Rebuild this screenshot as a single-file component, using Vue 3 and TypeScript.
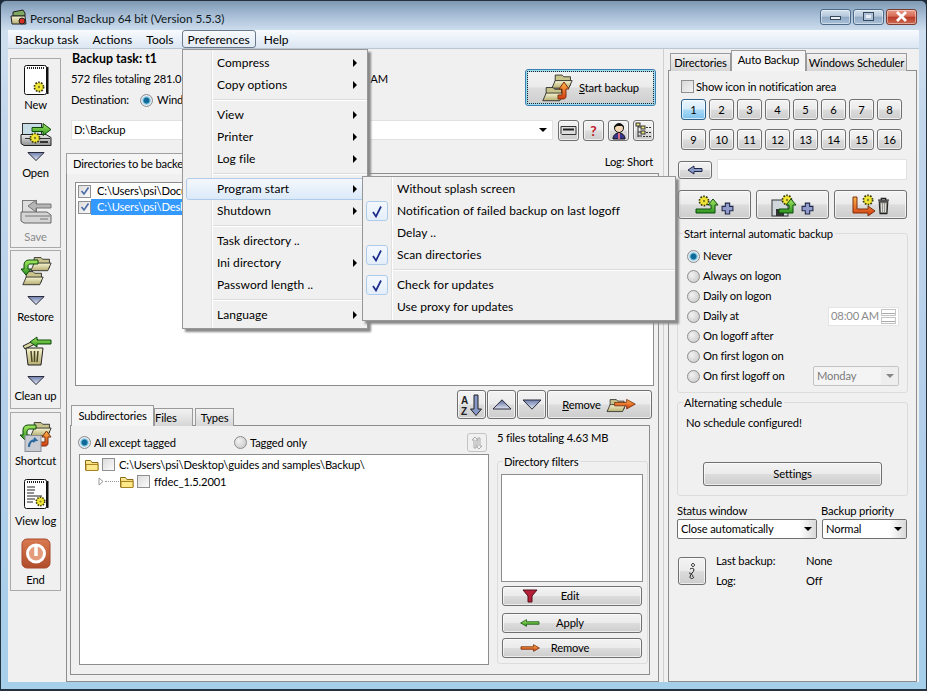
<script setup lang="ts">
interface MenuItem { label?: string; arrow?: boolean; hl?: boolean; check?: boolean; sep?: boolean }
const prefMenu: MenuItem[] = [
  { label: 'Compress', arrow: true }, { label: 'Copy options', arrow: true }, { sep: true },
  { label: 'View', arrow: true }, { label: 'Printer', arrow: true }, { label: 'Log file', arrow: true }, { sep: true },
  { label: 'Program start', arrow: true, hl: true }, { label: 'Shutdown', arrow: true }, { sep: true },
  { label: 'Task directory ..' }, { label: 'Ini directory', arrow: true }, { label: 'Password length ..' }, { sep: true },
  { label: 'Language', arrow: true },
]
const startMenu: MenuItem[] = [
  { label: 'Without splash screen' }, { label: 'Notification of failed backup on last logoff', check: true },
  { label: 'Delay ..' }, { label: 'Scan directories', check: true }, { sep: true },
  { label: 'Check for updates', check: true }, { label: 'Use proxy for updates' },
]
const menuBar = ['Backup task', 'Actions', 'Tools', 'Preferences', 'Help']
const numbers = Array.from({ length: 16 }, (_, i) => i + 1)
const schedules = ['Never', 'Always on logon', 'Daily on logon', 'Daily at', 'On logoff after', 'On first logon on', 'On first logoff on']
</script>

<template>
  <svg class="defs" width="0" height="0" aria-hidden="true">
    <defs>
      <linearGradient id="gF" x1="0" y1="0" x2="0" y2="1"><stop offset="0" stop-color="#f8f5d2" /><stop offset="1" stop-color="#b5ad70" /></linearGradient>
      <linearGradient id="gY" x1="0" y1="0" x2="0" y2="1"><stop offset="0" stop-color="#fff0a0" /><stop offset="1" stop-color="#e6b93a" /></linearGradient>
      <linearGradient id="gG" x1="0" y1="0" x2="0" y2="1"><stop offset="0" stop-color="#a5e860" /><stop offset="1" stop-color="#2c9420" /></linearGradient>
      <linearGradient id="gO" x1="0" y1="0" x2="0" y2="1"><stop offset="0" stop-color="#ffb548" /><stop offset="1" stop-color="#d23a10" /></linearGradient>
      <linearGradient id="gT" x1="0" y1="0" x2="0" y2="1"><stop offset="0" stop-color="#6f80ae" /><stop offset="1" stop-color="#e4e8f4" /></linearGradient>
      <linearGradient id="gU" x1="0" y1="1" x2="0" y2="0"><stop offset="0" stop-color="#e4e8f4" /><stop offset="1" stop-color="#4f6294" /></linearGradient>
      <linearGradient id="gD" x1="0" y1="0" x2="0" y2="1"><stop offset="0" stop-color="#ececec" /><stop offset="1" stop-color="#8f8f8f" /></linearGradient>
      <linearGradient id="gE" x1="0" y1="0" x2="0" y2="1"><stop offset="0" stop-color="#d97a52" /><stop offset="1" stop-color="#b04c2a" /></linearGradient>
    </defs>
    <symbol id="folder" viewBox="0 0 26 20">
      <path d="M5 10V3h8l2 2h8v10H5z" fill="#c9c38c" stroke="#222" />
      <path d="M1 18.500l4-9h20l-4 9z" fill="url(#gF)" stroke="#222" />
    </symbol>
    <symbol id="tfolder" viewBox="0 0 16 14">
      <path d="M1.500 12V2.500h5l1.500 2h6V12z" fill="url(#gY)" stroke="#8a6a14" />
      <path d="M2 12.500V6.500h12v6z" fill="#ffe88a" stroke="#a88420" />
    </symbol>
    <symbol id="gear" viewBox="0 0 12 12">
      <circle cx="6" cy="6" r="4.600" fill="#e8dc20" stroke="#3a3a10" stroke-width="1.800" stroke-dasharray="1.600 1.300" />
      <circle cx="6" cy="6" r="3.300" fill="#f2e63a" />
      <circle cx="6" cy="6" r="1.200" fill="#8a8420" />
    </symbol>
    <symbol id="tri" viewBox="0 0 18 9"><path d="M.8.5h16.400L9 8.500z" fill="url(#gT)" stroke="#2a2a3a" /></symbol>
    <symbol id="plus" viewBox="0 0 12 12"><path d="M4 1h4v3h3v4H8v3H4V8H1V4h3z" fill="#8f9ccc" stroke="#22284a" /></symbol>
    <symbol id="trash" viewBox="0 0 12 16">
      <path d="M1 3h10M4 3V1.500h4V3" fill="none" stroke="#222" stroke-width="1.200" />
      <path d="M2 4.500h8l-.8 11H2.800z" fill="#8a8a80" stroke="#222" />
      <path d="M4.200 6v8M6 6v8M7.800 6v8" stroke="#ddd" />
    </symbol>
    <symbol id="page" viewBox="0 0 26 32">
      <rect x="1.500" y="1.500" width="22" height="29" rx="2" fill="#fff" stroke="#111" />
      <path d="M24.500 3v27" stroke="#111" stroke-width="2" />
      <path d="M4 4h17" stroke="#222" stroke-width="2" stroke-dasharray="1 1" />
    </symbol>
    <symbol id="drive" viewBox="0 0 32 14">
      <path d="M1 1.500h25l5 3v8H4l-3-2z" fill="url(#gD)" stroke="#222" />
      <path d="M5 5.500h25" stroke="#333" />
      <path d="M20 9h8" stroke="#333" stroke-width="2" />
    </symbol>
    <symbol id="larr" viewBox="0 0 24 10"><path d="M.8 5l7-4v2.500h15v3h-15V9z" fill="url(#gG)" stroke="#1a5a14" /></symbol>
    <symbol id="rarr" viewBox="0 0 24 10"><path d="M23.200 5l-7-4v2.500h-15v3h15V9z" fill="url(#gO)" stroke="#7a3010" /></symbol>
  </svg>

  <div class="window">
    <header class="titlebar">
      <svg class="appicon" width="17" height="17" viewBox="0 0 17 17">
        <path d="M3 3l10-2 2 3v3H3z" fill="#7fa860" stroke="#222" />
        <path d="M1 7h14l1 8H2z" fill="url(#gF)" stroke="#222" />
        <circle cx="12" cy="12" r="3" fill="#d83020" stroke="#222" />
      </svg>
      <span class="title">Personal Backup 64 bit (Version 5.5.3)</span>
      <div class="caps">
        <span class="cap"><i class="g-min"></i></span>
        <span class="cap"><i class="g-max"></i></span>
        <span class="cap close">
          <svg width="13" height="11" viewBox="0 0 13 11"><path d="M2 1l9 9M11 1l-9 9" stroke="#fff" stroke-width="2.800" /></svg>
        </span>
      </div>
    </header>

    <nav class="menubar">
      <span v-for="m in menuBar" :key="m" class="mb-item" :class="{ open: m === 'Preferences' }">{{ m }}</span>
    </nav>

    <main class="client">
      <aside class="toolbar">
        <section class="tgroup g1">
          <div class="tool t-new">
            <svg class="ic" width="26" height="32" viewBox="0 0 26 32"><use href="#page" width="26" height="32" /><use href="#gear" x="10" y="17" width="12" height="12" /></svg>
            <span>New</span>
          </div>
          <div class="tool t-open">
            <svg class="ic" width="32" height="26" viewBox="0 0 32 26">
              <rect x="2.500" y="1.500" width="19" height="13" fill="#c7dde6" stroke="#333" />
              <use href="#drive" y="11" width="32" height="14" />
              <path d="M12 5.500h11V1.500l8 6-8 6v-4H12z" fill="url(#gG)" stroke="#0c4a0c" />
              <use href="#gear" x="9" y="10" width="12" height="12" />
            </svg>
            <svg class="tr" width="18" height="9"><use href="#tri" width="18" height="9" /></svg>
            <span>Open</span>
          </div>
          <div class="tool t-save">
            <svg class="ic" width="32" height="27" viewBox="0 0 32 27">
              <rect x="2.500" y="2.500" width="14" height="12" fill="#ddd" stroke="#777" />
              <path d="M31 6H16V2L8 8l8 6v-4h15z" fill="#b5b5b5" stroke="#777" />
              <path d="M1 14h26l4 3v8H4l-3-2z" fill="#d4d4d4" stroke="#666" />
              <path d="M5 18h25M20 21h8" stroke="#777" />
            </svg>
            <span class="dim">Save</span>
          </div>
        </section>
        <section class="tgroup g2">
          <div class="tool t-restore">
            <svg class="ic" width="32" height="31" viewBox="0 0 32 31">
              <use href="#folder" x="10" width="22" height="17" />
              <use href="#folder" x="2" y="14" width="22" height="17" />
              <path d="M18 5H9C6 5 4 7 4 10v4H1l5 6 5-6H8v-3c0-1 1-2 2-2h8z" fill="url(#gG)" stroke="#0c4a0c" />
            </svg>
            <svg class="tr" width="18" height="9"><use href="#tri" width="18" height="9" /></svg>
            <span>Restore</span>
          </div>
          <div class="tool t-clean">
            <svg class="ic" width="32" height="30" viewBox="0 0 32 30">
              <path d="M3 10l14-7 2 3-14 7z" fill="#d8d4a0" stroke="#222" />
              <path d="M6 12h17l-2 17H8z" fill="url(#gF)" stroke="#222" />
              <path d="M11 15l1 11M14.500 15v11M18 15l-1 11" stroke="#4a4620" stroke-width="1.500" />
              <path d="M31 4H17V1l-7 5 7 5V8h14z" fill="url(#gG)" stroke="#0c4a0c" />
            </svg>
            <svg class="tr" width="18" height="9"><use href="#tri" width="18" height="9" /></svg>
            <span>Clean up</span>
          </div>
        </section>
        <section class="tgroup g3">
          <div class="tool t-short">
            <svg class="ic" width="33" height="32" viewBox="0 0 33 32">
              <use href="#folder" x="11" width="22" height="17" />
              <path d="M17 5H9C6 5 4 7 4 10v5H1l5 5 5-5H8v-3c0-1 1-3 2-3h7z" fill="url(#gG)" stroke="#0c4a0c" />
              <path d="M19 26h7c2 0 3-1 3-3v-6h3l-4.500-6L23 17h3v5h-7z" fill="url(#gO)" stroke="#7a3010" />
              <rect x="6" y="15.500" width="16" height="16" fill="#c8ccd2" stroke="#8a8f98" />
              <path d="M10 27c0-5 3-7 7-7l-2-2M17 20l-3 2" fill="none" stroke="#2d6aa0" stroke-width="2" />
            </svg>
            <span>Shortcut</span>
          </div>
          <div class="tool t-log">
            <svg class="ic" width="26" height="32" viewBox="0 0 26 32">
              <use href="#page" width="26" height="32" />
              <path d="M4 9h8M4 12h8M4 15h7M4 18h15M4 21h8M4 24h6" stroke="#222" />
              <use href="#gear" x="12" y="18" width="11" height="11" />
            </svg>
            <span>View log</span>
          </div>
          <div class="tool t-end">
            <svg class="ic" width="30" height="31" viewBox="0 0 30 31">
              <rect x="1" y="1" width="28" height="29" rx="5" fill="url(#gE)" stroke="#a84a2c" />
              <circle cx="15" cy="15.500" r="8.500" fill="#e39d7c" stroke="#fff" stroke-width="3" />
              <path d="M15 8v10" stroke="#fff" stroke-width="3.500" />
            </svg>
            <span>End</span>
          </div>
        </section>
      </aside>

      <div class="center">
        <div class="top">
          <div class="top-text">
            <div class="line bold">Backup task: t1</div>
            <div class="line files"><span>572 files totaling 281.0 MB</span><span>07:27 AM</span></div>
            <div class="line dest"><span class="dest-label">Destination:</span><i class="radio on"></i><span>Windows</span></div>
          </div>
          <button class="btn start">
            <svg width="33" height="31" viewBox="0 0 33 31">
              <use href="#folder" x="11" width="22" height="18" />
              <use href="#folder" y="13" width="26" height="17" />
              <path d="M18 27h5c2 0 3-1 3-3v-7h3l-5-7-5 7h3v6h-4z" fill="url(#gO)" stroke="#7a3010" />
            </svg>
            <span><u>S</u>tart backup</span>
          </button>
        </div>
        <div class="dest-row">
          <div class="dest-combo"><span>D:\Backup</span><i class="caret"></i></div>
          <button class="btn sq">
            <svg width="17" height="11" viewBox="0 0 17 11"><path d="M1 1.500h15v8H2l-1-1z" fill="#ddd" stroke="#333" /><path d="M3 4.500h11" stroke="#222" stroke-width="2" /></svg>
          </button>
          <button class="btn sq help">?</button>
          <button class="btn sq">
            <svg width="16" height="18" viewBox="0 0 16 18"><circle cx="8" cy="6" r="4.500" fill="#f5d8b5" stroke="#111" /><path d="M3 6c0-5 10-6 10 0l-2-2H6z" fill="#111" /><path d="M2 17c0-4 3-6 6-6s6 2 6 6z" fill="#38358a" stroke="#111" /><path d="M8 11v6" stroke="#d86a8a" stroke-width="2" /></svg>
          </button>
          <button class="btn sq">
            <svg width="17" height="17" viewBox="0 0 17 17"><path d="M3 2v13M3 5h4M3 10h4M3 14h4" stroke="#333" fill="none" /><rect x="1" y="1" width="4" height="3" fill="#e8e080" stroke="#333" /><rect x="6" y="4" width="4" height="3" fill="#e8e080" stroke="#333" /><rect x="6" y="9" width="4" height="3" fill="#e8e080" stroke="#333" /><path d="M11 5.500h5M11 10.500h5M8 14.500h8" stroke="#333" stroke-dasharray="2 1" /></svg>
          </button>
        </div>

        <div class="dirs-head">
          <span class="dirs-tab">Directories to be backed up</span>
          <span class="log-short">Log: Short</span>
        </div>
        <section class="dirs">
          <div class="dirlist">
            <div class="dirrow"><i class="cb checked"><svg width="10" height="10" viewBox="0 0 10 10"><path d="M1.500 5l2.500 3 4.500-6.500" fill="none" stroke="#4a6aa8" stroke-width="1.600" /></svg></i><span>C:\Users\psi\Docu</span></div>
            <div class="dirrow"><i class="cb checked"><svg width="10" height="10" viewBox="0 0 10 10"><path d="M1.500 5l2.500 3 4.500-6.500" fill="none" stroke="#4a6aa8" stroke-width="1.600" /></svg></i><span class="sel">C:\Users\psi\Desk</span></div>
          </div>
          <div class="dir-actions">
            <div class="btabs">
              <span class="btab active">Subdirectories</span>
              <span class="btab files">Files</span>
              <span class="btab types">Types</span>
            </div>
            <div class="act-btns">
              <button class="btn act">
                <svg width="24" height="24" viewBox="0 0 24 24"><text x="1" y="11" class="az">A</text><text x="1" y="22" class="az">Z</text><path d="M14 2h4v14h3.500L16 22.500 10.500 16H14z" fill="#8898c8" stroke="#222" /></svg>
              </button>
              <button class="btn act"><svg width="20" height="11" viewBox="0 0 20 11"><path d="M10 .8L19 10H1z" fill="url(#gU)" stroke="#2a2a3a" /></svg></button>
              <button class="btn act"><svg width="20" height="11" viewBox="0 0 20 11"><path d="M10 10.200L19 1H1z" fill="url(#gT)" stroke="#2a2a3a" /></svg></button>
              <button class="btn act-remove">
                <span><u>R</u>emove</span>
                <svg width="31" height="18" viewBox="0 0 36 20"><use href="#folder" y="1" width="24" height="18" /><path d="M10 7h14V3.500L34 9l-10 5.500V11H10z" fill="url(#gO)" stroke="#7a3010" /></svg>
              </button>
            </div>
          </div>
          <section class="subpanel">
            <div class="sub-left">
              <div class="sub-radios">
                <label class="rlabel first"><i class="radio on"></i>All except tagged</label>
                <label class="rlabel second"><i class="radio"></i>Tagged only</label>
                <button class="btn refresh" disabled>
                  <svg width="14" height="14" viewBox="0 0 14 14"><path d="M4 12V4H2l3-3 3 3H6v8zM10 2v8h2l-3 3-3-3h2V2z" fill="none" stroke="#aaa" /></svg>
                </button>
              </div>
              <div class="tree">
                <div class="tree-row">
                  <svg width="16" height="14"><use href="#tfolder" width="16" height="14" /></svg>
                  <i class="cb"></i><span class="tree-text">C:\Users\psi\Desktop\guides and samples\Backup\</span>
                </div>
                <div class="tree-row sub">
                  <svg width="6" height="9" viewBox="0 0 6 9"><path d="M1 1l4 3.500L1 8z" fill="#fff" stroke="#999" /></svg>
                  <i class="dots"></i>
                  <svg width="16" height="14"><use href="#tfolder" width="16" height="14" /></svg>
                  <i class="cb"></i><span class="tree-text">ffdec_1.5.2001</span>
                </div>
              </div>
            </div>
            <div class="sub-right">
              <div class="count">5 files totaling 4.63 MB</div>
              <div class="grp filters">
                <div class="grp-title">Directory filters</div>
                <div class="filter-box"></div>
                <button class="btn fbtn edit">
                  <svg width="20" height="14" viewBox="0 0 20 14"><path d="M3 1h14l-5 6v6H8V7z" fill="#b52038" stroke="#501018" /></svg>
                  <span>Edit</span>
                </button>
                <button class="btn fbtn apply">
                  <svg width="20" height="10"><use href="#larr" width="20" height="10" /></svg>
                  <span>Apply</span>
                </button>
                <button class="btn fbtn">
                  <svg width="20" height="10"><use href="#rarr" width="20" height="10" /></svg>
                  <span>Remove</span>
                </button>
              </div>
            </div>
          </section>
        </section>
      </div>

      <div class="right">
        <div class="rtabs">
          <span class="rtab t1">Directories</span>
          <span class="rtab t2 active">Auto Backup</span>
          <span class="rtab t3">Windows Scheduler</span>
        </div>
        <section class="rpanel">
          <label class="show"><i class="cb plain"></i>Show icon in notification area</label>
          <div class="nums">
            <button v-for="n in numbers" :key="n" class="btn num" :class="{ on: n === 1 }">{{ n }}</button>
          </div>
          <div class="name-row">
            <button class="btn back"><svg width="16" height="10" viewBox="0 0 16 10"><path d="M1 5l6-4v2.500h8v3H7V9z" fill="#8c9ac8" stroke="#20284a" /></svg></button>
            <div class="name-input"></div>
          </div>
          <div class="three">
            <button class="btn tbtn">
              <svg width="40" height="22" viewBox="0 0 40 22">
                <use href="#gear" x="3" y="1" width="12" height="12" />
                <path d="M1 15h15v-4h-3l5-6 5 6h-3v8H1z" fill="url(#gG)" stroke="#0c4a0c" />
                <use href="#plus" x="26" y="8" width="13" height="13" />
              </svg>
            </button>
            <button class="btn tbtn">
              <svg width="44" height="24" viewBox="0 0 44 24">
                <rect x="1" y="7" width="16" height="16" fill="#cfd6dc" stroke="#333" /><rect x="5" y="16" width="8" height="7" fill="#333" />
                <use href="#gear" x="10" y="1" width="12" height="12" />
                <path d="M8 16h10v-4h-3l5-6 5 6h-3v8H8z" fill="url(#gG)" stroke="#0c4a0c" />
                <use href="#plus" x="30" y="9" width="13" height="13" />
              </svg>
            </button>
            <button class="btn tbtn">
              <svg width="38" height="24" viewBox="0 0 38 24">
                <use href="#gear" x="10" y="1" width="12" height="12" />
                <path d="M1 4h4v12h11v-3l7 5-7 5v-3H1z" fill="url(#gO)" stroke="#7a3010" />
                <use href="#trash" x="25" y="3" width="13" height="19" />
              </svg>
            </button>
          </div>

          <div class="grp sched">
            <div class="grp-title">Start internal automatic backup</div>
            <div class="radios">
              <div v-for="(s, i) in schedules" :key="s" class="rrow">
                <label class="rlabel"><i class="radio" :class="{ on: i === 0 }"></i>{{ s }}</label>
                <div v-if="i === 3" class="timefield"><span>08:00 AM</span><i class="spin"><b></b><b class="dn"></b></i></div>
                <div v-if="i === 6" class="combo disabled"><span>Monday</span><i class="combo-btn"><i class="caret grey"></i></i></div>
              </div>
            </div>
          </div>

          <div class="grp alt">
            <div class="grp-title">Alternating schedule</div>
            <div class="alt-text">No schedule configured!</div>
            <button class="btn settings">Settings</button>
          </div>

          <div class="selects">
            <div class="sel-col status">
              <div class="sel-label">Status window</div>
              <div class="combo"><span>Close automatically</span><i class="combo-btn"><i class="caret"></i></i></div>
            </div>
            <div class="sel-col prio">
              <div class="sel-label">Backup priority</div>
              <div class="combo"><span>Normal</span><i class="combo-btn"><i class="caret"></i></i></div>
            </div>
          </div>

          <div class="info-row">
            <button class="btn info">
              <svg width="12" height="18" viewBox="0 0 12 18"><path d="M7 1.500a1.500 1.500 0 1 0 .01 0M4 7c2-1 4-1 4 1 0 2-4 4-4 7 0 2 3 2 4 0M3 11c2 0 4 2 4 4" fill="none" stroke="#222" /></svg>
            </button>
            <dl class="info-grid">
              <dt>Last backup:</dt><dd>None</dd>
              <dt>Log:</dt><dd>Off</dd>
            </dl>
          </div>
        </section>
      </div>
    </main>

    <div class="menu pref">
      <template v-for="(item, i) in prefMenu" :key="i">
        <div v-if="item.sep" class="msep"></div>
        <div v-else class="mitem" :class="{ hl: item.hl }"><span>{{ item.label }}</span><i v-if="item.arrow" class="marrow"></i></div>
      </template>
    </div>
    <div class="menu startm">
      <template v-for="(item, i) in startMenu" :key="i">
        <div v-if="item.sep" class="msep"></div>
        <div v-else class="mitem">
          <i v-if="item.check" class="mcheck"><svg width="12" height="13" viewBox="0 0 12 13"><path d="M2 7l3 4.500L10 1.500" fill="none" stroke="#1a2a8a" stroke-width="1.700" /></svg></i>
          <span>{{ item.label }}</span>
        </div>
      </template>
    </div>
  </div>
</template>

<style>
html, body { margin: 0; padding: 0; background: #1a2a36; overflow: hidden; }
#app { width: 927px; height: 691px; }
</style>

<style scoped>
* { box-sizing: border-box; }
i { font-style: normal; display: block; flex: none; }
.defs { display: block; }
.window {
  position: relative; width: 927px; height: 691px; padding: 0 7px 7px;
  border: 1px solid #24323f; border-bottom-width: 2px; border-radius: 6px 6px 0 0;
  color: #000;
  font: 11.2px/16px Lato, sans-serif; letter-spacing: -0.15px;
  background: linear-gradient(180deg, #7f99b3 0, #a6bdd5 14px, #cfdfef 30px, #c3d7ec 120px, #b4cfea 400px, #a6cfea 691px);
  overflow: hidden;
  display: flex; flex-direction: column;
}
.titlebar { height: 29px; display: flex; align-items: center; margin-left: 2px; padding-top: 4px; flex: none; }
.title { margin-left: 3px; font-size: 11.7px; letter-spacing: 0; color: #101820; }
.caps { margin-left: auto; margin-right: 2px; display: flex; gap: 2px; margin-top: -2px; }
.cap { width: 31px; height: 16px; border: 1px solid #4d6a88; border-radius: 3px; display: flex; align-items: center; justify-content: center;
  background: linear-gradient(#d4e1ee 0, #b5c8db 45%, #90a9c4 50%, #a8c0d8 100%); box-shadow: inset 0 0 0 1px #ffffff70; }
.cap.close { border-color: #7a3b30; background: linear-gradient(#e89a88 0, #d66b56 45%, #b83a26 50%, #cc6a50 100%); }
.g-min { width: 11px; height: 4px; background: #e8eef4; border: 1px solid #39495c; margin-top: 3px; }
.g-max { width: 11px; height: 9px; border: 1px solid #39495c; background: #e8eef4; position: relative; box-shadow: inset 0 0 0 2px #aec3d9; }
.menubar { height: 19px; flex: none; display: flex; align-items: center;
  background: linear-gradient(#f8fbfe, #dbe6f2); border-bottom: 1px solid #b9c6d3; font-size: 12px; letter-spacing: 0; }
.mb-item { padding: 0 6px; line-height: 17px; height: 18px; border: 1px solid transparent; white-space: nowrap; }
.mb-item.open { margin: 0 1px; padding: 0 5px; border-color: #6a7a8c; border-radius: 3px; background: linear-gradient(#f6f9fc, #e2eaf3); }
.client { flex: 1; display: flex; background: #f0f0f0; min-height: 0; }

.toolbar { width: 51px; margin-left: 2px; flex: none; padding-top: 9px; }
.tgroup { border: 1px solid #a9a9a9; }
.g1 { height: 190px; margin-bottom: 2px; }
.g2 { height: 159px; margin-bottom: 3px; }
.g3 { height: 179px; }
.tool { display: flex; flex-direction: column; align-items: center; }
.ic, .tr { display: block; flex: none; }
.dim { color: #8a8a8a; }
.t-new { margin-top: 5px; } .t-new .ic { margin-bottom: 1px; }
.t-open { margin-top: 9px; } .t-open .tr { margin: 4px 0 4px; }
.t-save { margin-top: 17px; } .t-save .ic { margin-bottom: 4px; }
.t-restore { margin-top: 4px; } .t-restore .tr { margin: 10px 0 4px; }
.t-clean { margin-top: 11px; } .t-clean .tr { margin: 10px 0 3px; }
.t-short { margin-top: 7px; } .t-short .ic { margin-bottom: 1px; }
.t-log { margin-top: 9px; } .t-log .ic { margin-bottom: 3px; }
.t-end { margin-top: 9px; } .t-end .ic { margin-bottom: 3px; }

.center { width: 598px; flex: none; margin-left: 5px; border-right: 1px solid #cfcfcf; display: flex; flex-direction: column; }
.top { height: 71px; display: flex; flex: none; }
.top-text { padding-left: 5px; }
.line { height: 20px; line-height: 20px; }
.bold { font-weight: 700; font-size: 12.4px; letter-spacing: 0; padding-left: 1px; }
.files { width: 317px; display: flex; justify-content: space-between; }
.dest { display: flex; align-items: center; height: 22px; }
.dest-label { width: 69px; }
.dest .radio { margin-right: 4px; }
.btn { font: inherit; letter-spacing: inherit; color: #000; padding: 0; margin: 0; flex: none; display: flex; align-items: center; justify-content: center;
  border: 1px solid #707070; border-radius: 3px;
  background: linear-gradient(#f3f3f3 0, #ebebeb 48%, #dcdcdc 52%, #cdcdcd 100%); box-shadow: inset 0 0 0 1px #ffffffa0; }
.start { width: 131px; height: 37px; margin: 20px 7px 0 auto; gap: 6px; border: 1px solid #3c7fb1; padding-left: 14px; justify-content: flex-start;
  outline: 1px dotted #222; outline-offset: -3px; box-shadow: inset 0 0 0 2px #9ddcf0; }
.dest-row { height: 21px; display: flex; gap: 4px; flex: none; padding-left: 5px; }
.dest-combo { width: 482px; margin-right: 1px; height: 20px; background: #fff; border: 1px solid #e2e2e2; display: flex; align-items: center; justify-content: space-between; padding: 0 5px 0 2px; }
.caret { width: 0; height: 0; border: 4px solid transparent; border-top: 4px solid #000; border-bottom: 0; }
.caret.grey { border-top-color: #888; }
.sq { width: 21px; height: 21px; }
.help { color: #c0202a; font-weight: 700; font-size: 14px; }
.dirs-head { height: 21px; margin-top: 12px; margin-bottom: -1px; display: flex; justify-content: space-between; width: 593px; position: relative; z-index: 1; flex: none; }
.dirs-tab { width: 190px; background: #f5f5f5; border: 1px solid #a0a0a0; border-bottom: 0; padding: 0 0 0 6px; line-height: 19px; }
.log-short { line-height: 18px; padding-right: 6px; }
.dirs { width: 593px; flex: 1; min-height: 0; border: 1px solid #8d8d8d; padding: 8px 4px 6px 3px; }
.dirlist { margin-left: 5px; height: 204px; background: #fff; border: 1px solid #8d8d8d; }
.dirrow { height: 16px; display: flex; align-items: center; padding-left: 2px; }
.cb { width: 13px; height: 13px; border: 1px solid #8e8f8f; background: linear-gradient(135deg, #dcdcdc, #fbfbfb); display: flex; align-items: center; justify-content: center; }
.dirrow span { padding: 0 0 0 6px; width: 92px; line-height: 16px; white-space: nowrap; }
.dirrow .sel { background: #3399ff; color: #fff; }
.dir-actions { height: 36px; margin-top: 4px; margin-bottom: -1px; display: flex; justify-content: space-between; position: relative; z-index: 1; }
.btabs { align-self: flex-end; display: flex; margin-left: 1px; }
.btab { height: 18px; line-height: 17px; padding: 0; border: 1px solid #9a9a9a; border-bottom: 0; text-align: center; background: linear-gradient(#f2f2f2, #d6d6d6); align-self: flex-end; }
.btab.active { height: 21px; width: 83px; background: #f5f5f5; line-height: 19px; }
.btab.files { width: 39px; }
.btab.types { width: 39px; margin-left: 2px; }
.act-btns { display: flex; gap: 1px; margin-right: 2px; align-self: flex-start; }
.act { width: 29px; height: 29px; }
.az { font: 700 10px/1 "Liberation Sans", sans-serif; fill: #222; }
.act-remove { width: 105px; height: 29px; gap: 5px; }
.subpanel { height: 250px; margin-right: 4px; border: 1px solid #8d8d8d; background: #f0f0f0; display: flex; }
.sub-left { width: 410px; margin-left: 8px; padding-top: 7px; flex: none; }
.sub-radios { height: 19px; display: flex; align-items: center; margin-bottom: 2px; }
.rlabel { display: flex; align-items: center; gap: 3px; white-space: nowrap; }
.sub-radios .first { width: 156px; margin-left: -1px; }
.refresh { width: 20px; height: 19px; margin-left: auto; margin-right: 2px; background: #f0f0f0; border-color: #c4c4c4; box-shadow: none; }
.radio { width: 13px; height: 13px; border-radius: 50%; border: 1px solid #8c8c8c; background: radial-gradient(circle at 35% 35%, #f2f2f2, #c4c4c4); position: relative; }
.radio.on { background: radial-gradient(circle at 50% 50%, #0f6a98 0, #0f6a98 30%, #7cc0e0 45%, #e4eef4 60%, #d0d8de 100%); }
.tree { height: 211px; background: #fff; border: 1px solid #8d8d8d; padding: 1px 0 0 4px; }
.tree-row { height: 17px; display: flex; align-items: center; }
.tree-row .cb { margin-left: 2px; }
.tree-text { margin-left: 4px; white-space: nowrap; }
.tree-row.sub { padding-left: 14px; }
.dots { width: 14px; height: 1px; margin: 0 0 0 1px; border-top: 1px dotted #999; }
.sub-right { width: 151px; margin-left: 8px; padding-top: 4px; flex: none; }
.count { height: 16px; margin-bottom: 15px; white-space: nowrap; }
.grp { border: 1px solid #dcdcdc; border-radius: 3px; }
.grp-title { margin-top: -8px; margin-left: 5px; width: fit-content; padding: 0 2px 0 1px; background: #f0f0f0; line-height: 16px; white-space: nowrap; }
.filters { height: 203px; }
.filter-box { width: 142px; height: 108px; background: #fff; border: 1px solid #8d8d8d; margin: 4px 0 0 3px; }
.fbtn { width: 140px; height: 20px; margin: 5px 0 0 4px; justify-content: flex-start; padding-left: 17px; }
.edit { margin-top: 4px; }
.apply { margin-top: 7px; }
.fbtn span { width: 40px; margin-left: 10px; text-align: center; }

.right { width: 250px; margin-left: 4px; flex: none; display: flex; flex-direction: column; }
.rtabs { height: 21px; margin-top: 1px; margin-bottom: -1px; padding-left: 2px; display: flex; align-items: flex-end; position: relative; z-index: 1; flex: none; }
.rtab { height: 18px; line-height: 17px; border: 1px solid #9a9a9a; border-bottom: 0; text-align: center; background: linear-gradient(#f2f2f2, #d6d6d6); white-space: nowrap; }
.rtab.active { height: 21px; background: #f5f5f5; line-height: 18px; }
.t1 { width: 61px; } .t2 { width: 75px; } .t3 { width: 101px; }
.rpanel { flex: 1; min-height: 0; width: 249px; border: 1px solid #8d8d8d; padding-top: 9px; }
.show { display: flex; align-items: center; gap: 2px; margin-left: 12px; height: 13px; white-space: nowrap; }
.cb.plain { background: linear-gradient(135deg, #d8d8d8, #f4f4f4); }
.nums { margin: 6px 0 0 12px; display: grid; grid-template-columns: repeat(8, 25px); grid-auto-rows: 21px; column-gap: 3px; row-gap: 9px; }
.num { height: 21px; }
.num.on { border-color: #2c628b; background: linear-gradient(#eaf6fd 0, #d5ecfb 48%, #a9d9f5 52%, #7dc2ee 100%); }
.name-row { display: flex; align-items: center; margin: 9px 0 0 9px; height: 21px; gap: 5px; }
.back { width: 34px; height: 18px; }
.name-input { width: 190px; height: 21px; background: #fff; border: 1px solid #e2e2e2; }
.three { display: flex; gap: 5px; margin: 10px 0 0 9px; }
.tbtn { width: 73px; height: 29px; }
.sched { height: 160px; width: 231px; margin: 14px 0 0 8px; }
.radios { margin-top: 4px; }
.rrow { height: 20px; display: flex; align-items: center; justify-content: space-between; padding: 0 8px 0 9px; }
.timefield { width: 71px; height: 19px; background: #fff; border: 1px solid #e4e4e4; display: flex; align-items: center; justify-content: space-between; padding-left: 2px; color: #8a8a8a; white-space: nowrap; }
.spin { width: 15px; height: 15px; margin-right: 2px; display: flex; flex-direction: column; gap: 1px; }
.spin b { display: block; flex: 1; border: 1px solid #c4c4c4; background: linear-gradient(transparent 3px, #aaa 3px, #aaa 4px, transparent 4px); }
.combo { height: 20px; border: 1px solid #707070; border-radius: 2px; background: #fff; display: flex; align-items: center; justify-content: space-between; padding-left: 3px; white-space: nowrap; }
.combo-btn { width: 17px; height: 18px; display: flex; align-items: center; justify-content: center; background: linear-gradient(90deg, #fff, #d8d8d8); }
.combo.disabled { width: 86px; color: #7a7a7a; border-color: #c4c4c4; background: #f4f4f4; }
.combo.disabled .combo-btn { background: #eee; }
.alt { height: 94px; width: 231px; margin: 9px 0 0 8px; }
.alt-text { margin: 4px 0 0 8px; }
.settings { width: 179px; height: 24px; margin: 31px 0 0 25px; }
.selects { display: flex; gap: 5px; margin: 7px 0 0 8px; }
.status { width: 140px; }
.prio { width: 85px; }
.sel-label { white-space: nowrap; }
.prio .sel-label { margin-left: -1px; }
.info-row { display: flex; align-items: center; margin: 12px 0 0 9px; height: 40px; }
.info { width: 28px; height: 28px; }
.info-grid { margin: 0 0 0 10px; display: grid; grid-template-columns: 90px auto; grid-auto-rows: 20px; align-items: center; }
.info-grid dt, .info-grid dd { margin: 0; }

.menu { position: absolute; z-index: 10; background: #f0f0f0; border: 1px solid #979797; box-shadow: 3px 3px 2px #8a8a8a; font-size: 12px; letter-spacing: 0.05px; }
.pref { left: 181px; top: 48px; width: 186px; height: 280px; padding-top: 2px;
  background-image: linear-gradient(90deg, transparent 28px, #e2e2e2 28px, #e2e2e2 29px, #fff 29px, #fff 30px, transparent 30px); }
.startm { left: 361px; top: 175px; width: 314px; height: 145px; z-index: 11; padding-top: 1px;
  background-image: linear-gradient(90deg, transparent 28px, #e2e2e2 28px, #e2e2e2 29px, #fff 29px, #fff 30px, transparent 30px); }
.mitem { height: 22px; padding-left: 34px; padding-right: 10px; display: flex; align-items: center; justify-content: space-between; position: relative; }
.mitem span { margin-top: -1px; }
.startm .mitem { justify-content: flex-start; }
.mitem.hl { margin: 0 -1px 0 3px; padding-left: 30px; padding-right: 10px; border: 1px solid #aeccea; border-radius: 3px; background: linear-gradient(#f4f8fd, #dbe9f8); }
.marrow { width: 0; height: 0; border: 4px solid transparent; border-left: 4px solid #000; border-right: 0; }
.msep { height: 8px; margin-left: 30px; background: linear-gradient(transparent 3px, #dcdcdc 3px, #dcdcdc 4px, #fff 4px, #fff 5px, transparent 5px); }
.mcheck { position: absolute; left: 3px; top: 1px; width: 22px; height: 20px; border: 1px solid #aeccea; border-radius: 3px; background: linear-gradient(#f4f8fd, #e4eefa); display: flex; align-items: center; justify-content: center; }
</style>
